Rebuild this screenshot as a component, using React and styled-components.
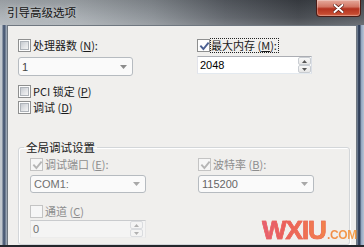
import React from "react";
import styled, { createGlobalStyle } from "styled-components";

const Global = createGlobalStyle`
  html, body { margin: 0; padding: 0; background: #fff; }
  body { width: 364px; height: 247px; overflow: hidden; }
`;

const Window = styled.div`
  position: relative;
  width: 364px;
  height: 247px;
  display: flex;
  flex-direction: column;
  overflow: hidden;
  font-family: "Noto Sans CJK SC", "Noto Sans", sans-serif;
  font-size: 11px;
  background: #8d959e;
`;

const TitleBar = styled.div`
  height: 25px;
  flex: none;
  display: flex;
  align-items: flex-start;
  justify-content: space-between;
  background:
    linear-gradient(to bottom, rgba(0,0,0,0.10), rgba(255,255,255,0.08) 70%, rgba(255,255,255,0.18)),
    linear-gradient(to right, #a9afb4 0%, #a2a8ad 22%, #858b91 42%, #585d64 62%, #3b3f45 82%, #4d5259 100%);
`;

const Title = styled.div`
  padding: 5px 0 0 7px;
  font-size: 11.5px;
  line-height: 14px;
  color: #141414;
  text-shadow: 0 0 5px rgba(255,255,255,0.6);
`;

const CloseButton = styled.div`
  width: 45px;
  height: 17px;
  margin-right: 3px;
  box-sizing: border-box;
  border: 1px solid #4a1c16;
  border-top: none;
  border-radius: 0 0 4px 4px;
  background: linear-gradient(to bottom, #e6aa9c 0%, #d27664 42%, #b3321f 55%, #c4492f 85%, #d46a4e 100%);
  box-shadow: inset 0 0 0 1px rgba(255,255,255,0.28);
  display: flex;
  align-items: center;
  justify-content: center;
`;

const FrameRow = styled.div`
  flex: 1;
  display: flex;
  min-height: 0;
`;

const LeftFrame = styled.div`
  width: 7px;
  flex: none;
  background:
    linear-gradient(to right, #c2c8ce 0px, #c2c8ce 2px, #55657e 3px, #4a5a74 5px, #9aa6b4 6px, #9aa6b4 7px);
`;

const RightFrame = styled.div`
  width: 7px;
  flex: none;
  background:
    linear-gradient(to right, #9aa6b4 0px, #3a4a64 1px, #2e3c55 3px, #8fa2bd 4px, #b7c4d5 7px);
`;

const Client = styled.div`
  flex: 1;
  min-width: 0;
  position: relative;
  overflow: hidden;
  background: #f0efed;
  border: 1px solid #6f7780;
  border-bottom: none;
  display: flex;
  flex-direction: column;
  padding: 11px 6px 0 10px;
`;

const BottomEdge = styled.div`
  height: 2px;
  flex: none;
  background: #24272c;
`;

const TopGrid = styled.div`
  display: grid;
  grid-template-columns: 115px 115px;
  column-gap: 64px;
`;

const Column = styled.div`
  display: flex;
  flex-direction: column;
`;

const CheckRow = styled.div`
  display: flex;
  align-items: center;
  gap: ${p => p.$gap ?? 2}px;
  height: 16px;
  line-height: 16px;
  margin-top: ${p => p.$mt || 0}px;
  color: ${p => (p.$disabled ? "#8d8d8d" : "#1a1a1a")};
  white-space: nowrap;
`;

const Box = styled.span`
  position: relative;
  width: 13px;
  height: 13px;
  flex: none;
  box-sizing: border-box;
  border: 1px solid ${p => (p.$disabled ? "#c4c4c4" : "#8e8f8f")};
  background: ${p => (p.$disabled ? "#f6f6f6" : "#fdfdfd")};
  display: flex;
  align-items: center;
  justify-content: center;
`;

const BoxInner = styled.span`
  width: 9px;
  height: 9px;
  box-sizing: border-box;
  border: 1px solid #aeb3b9;
  background: linear-gradient(135deg, #c6cad0 0%, #dfe1e4 50%, #f4f4f4 100%);
`;

const CheckMark = styled.svg`
  position: absolute;
  left: 0;
  top: 0;
`;

const Focus = styled.span`
  outline: 1px dotted #222;
  outline-offset: -1px;
  padding: 0 2px 0 1px;
  line-height: 15px;
`;

const Mn = styled.span`
  text-decoration: underline;
  text-underline-offset: 1px;
`;

const Select = styled.div`
  height: ${p => p.$h || 19}px;
  margin-top: ${p => p.$mt || 0}px;
  box-sizing: border-box;
  border: 1px solid #b6bbc0;
  border-radius: 3px;
  background: #fafafa;
  display: flex;
  align-items: center;
  justify-content: space-between;
  padding: 0 5px 0 3px;
  font-family: "Liberation Sans", "DejaVu Sans", sans-serif;
  font-size: 11px;
  color: ${p => p.$color || "#6c6c6c"};
`;

const SpinBox = styled.div`
  height: 18px;
  margin-top: ${p => p.$mt || 0}px;
  box-sizing: border-box;
  border: 1px solid;
  border-color: ${p => (p.$disabled ? "#c9cbce #e6e6e6 #ececec #e6e6e6" : "#abadb3 #dbdfe6 #e3e9ef #e2e3ea")};
  background: ${p => (p.$disabled ? "#f4f4f4" : "#ffffff")};
  display: flex;
  align-items: stretch;
`;

const SpinText = styled.div`
  flex: 1;
  display: flex;
  align-items: center;
  padding-left: 2px;
  font-family: "Liberation Sans", "DejaVu Sans", sans-serif;
  font-size: 11px;
  color: ${p => (p.$disabled ? "#707070" : "#000")};
`;

const SpinButtons = styled.div`
  width: 13px;
  display: flex;
  flex-direction: column;
  margin-right: ${p => p.$mr ?? 0}px;
`;

const SpinBtn = styled.div`
  flex: 1;
  box-sizing: border-box;
  border: 1px solid ${p => (p.$disabled ? "#dadcdf" : "#c9cdd2")};
  border-radius: 2px;
  background: ${p => (p.$disabled ? "#f4f4f4" : "linear-gradient(#f8f8f8, #e6e6e6)")};
  display: flex;
  align-items: center;
  justify-content: center;
`;

const TextRow = styled.div`
  margin-top: ${p => p.$mt || 0}px;
  display: flex;
  flex-direction: column;
`;

const Group = styled.fieldset`
  margin: 26px 0 0 0;
  padding: 2px 0 0 11px;
  min-width: 0;
  height: 140px;
  border: 1px solid #d3d6d9;
  border-radius: 3px;
  box-shadow: inset 1px 1px 0 #ffffff, 1px 1px 0 #ffffff;
`;

const Legend = styled.legend`
  margin-left: -6px;
  padding: 0 2px;
  line-height: 13px;
  font-size: 11.5px;
  color: #1a1a1a;
`;

const GroupGrid = styled.div`
  display: grid;
  grid-template-columns: 116px 116px;
  column-gap: 52px;
`;

const Watermark = styled.div`
  position: absolute;
  left: 262px;
  top: 217px;
  display: flex;
  align-items: baseline;
  font-family: "Liberation Sans", Arial, sans-serif;
  font-weight: 700;
  opacity: 0.92;
`;

const WMain = styled.span`
  font-size: 26px;
  letter-spacing: -1px;
  line-height: 26px;
  background: linear-gradient(to right, #e6546a 0%, #ea5350 35%, #ee6646 65%, #f27c3e 100%);
  -webkit-background-clip: text;
  background-clip: text;
  color: transparent;
  -webkit-text-stroke: 0.7px rgba(236, 92, 78, 0.85);
`;

const WSub = styled.span`
  font-size: 12px;
  line-height: 12px;
  letter-spacing: -0.3px;
  margin-left: 1px;
  background: linear-gradient(to right, #f2823c, #f59a3c);
  -webkit-background-clip: text;
  background-clip: text;
  color: transparent;
`;

function Check({ checked, disabled }) {
  return (
    <Box $disabled={disabled}>
      {!checked && !disabled && <BoxInner />}
      {checked && (
        <CheckMark width="13" height="13" viewBox="0 0 13 13">
          <path
            d="M3 6.3 L5.4 9 L10 3.4"
            fill="none"
            stroke={disabled ? "#b5b5b5" : "#4b5f91"}
            strokeWidth="1.9"
            strokeLinecap="square"
          />
        </CheckMark>
      )}
    </Box>
  );
}

function Arrow({ color = "#8c8c8c" }) {
  return (
    <svg width="7" height="4" viewBox="0 0 7 4">
      <path d="M0 0H7L3.5 4Z" fill={color} />
    </svg>
  );
}

function Spinner({ disabled, mr }) {
  const c = disabled ? "#b0b0b0" : "#555";
  return (
    <SpinButtons $mr={mr}>
      <SpinBtn $disabled={disabled}>
        <svg width="5" height="3" viewBox="0 0 5 3"><path d="M0 3H5L2.5 0Z" fill={c} /></svg>
      </SpinBtn>
      <SpinBtn $disabled={disabled}>
        <svg width="5" height="3" viewBox="0 0 5 3"><path d="M0 0H5L2.5 3Z" fill={c} /></svg>
      </SpinBtn>
    </SpinButtons>
  );
}

export default function App() {
  return (
    <>
      <Global />
      <Window>
        <TitleBar>
          <Title>引导高级选项</Title>
          <CloseButton>
            <svg width="11" height="9" viewBox="0 0 11 9">
              <path d="M1.5 1 L9.5 8 M9.5 1 L1.5 8" stroke="#5a1a12" strokeWidth="3.4" strokeLinecap="round" />
              <path d="M1.5 1 L9.5 8 M9.5 1 L1.5 8" stroke="#ffffff" strokeWidth="2" strokeLinecap="round" />
            </svg>
          </CloseButton>
        </TitleBar>
        <FrameRow>
          <LeftFrame />
          <Client>
            <TopGrid>
              <Column>
                <CheckRow>
                  <Check />
                  <span>处理器数 (<Mn>N</Mn>):</span>
                </CheckRow>
                <Select $mt={4} $color="#444">
                  <span>1</span>
                  <Arrow />
                </Select>
              </Column>
              <Column>
                <CheckRow $gap={0}>
                  <Check checked />
                  <Focus>最大内存 (<Mn>M</Mn>):</Focus>
                </CheckRow>
                <SpinBox $mt={3}>
                  <SpinText>2048</SpinText>
                  <Spinner />
                </SpinBox>
              </Column>
            </TopGrid>
            <TextRow $mt={7}>
              <CheckRow>
                <Check />
                <span>PCI 锁定 (<Mn>P</Mn>)</span>
              </CheckRow>
              <CheckRow>
                <Check />
                <span>调试 (<Mn>D</Mn>)</span>
              </CheckRow>
            </TextRow>
            <Group>
              <Legend>全局调试设置</Legend>
              <GroupGrid>
                <Column>
                  <CheckRow $disabled>
                    <Check checked disabled />
                    <span>调试端口 (<Mn>E</Mn>):</span>
                  </CheckRow>
                  <Select $mt={3} $h={18} $color="#707070">
                    <span>COM1:</span>
                    <Arrow color="#a8a8a8" />
                  </Select>
                  <CheckRow $disabled $mt={10}>
                    <Check disabled />
                    <span>通道 (<Mn>C</Mn>)</span>
                  </CheckRow>
                  <SpinBox $mt={1} $disabled>
                    <SpinText $disabled>0</SpinText>
                    <Spinner disabled mr={2} />
                  </SpinBox>
                </Column>
                <Column>
                  <CheckRow $disabled>
                    <Check checked disabled />
                    <span>波特率 (<Mn>B</Mn>):</span>
                  </CheckRow>
                  <Select $mt={3} $h={18} $color="#666">
                    <span>115200</span>
                    <Arrow color="#a8a8a8" />
                  </Select>
                </Column>
              </GroupGrid>
            </Group>
          </Client>
          <RightFrame />
        </FrameRow>
        <BottomEdge />
        <Watermark>
          <WMain>WXIU</WMain>
          <WSub>.COM</WSub>
        </Watermark>
      </Window>
    </>
  );
}
